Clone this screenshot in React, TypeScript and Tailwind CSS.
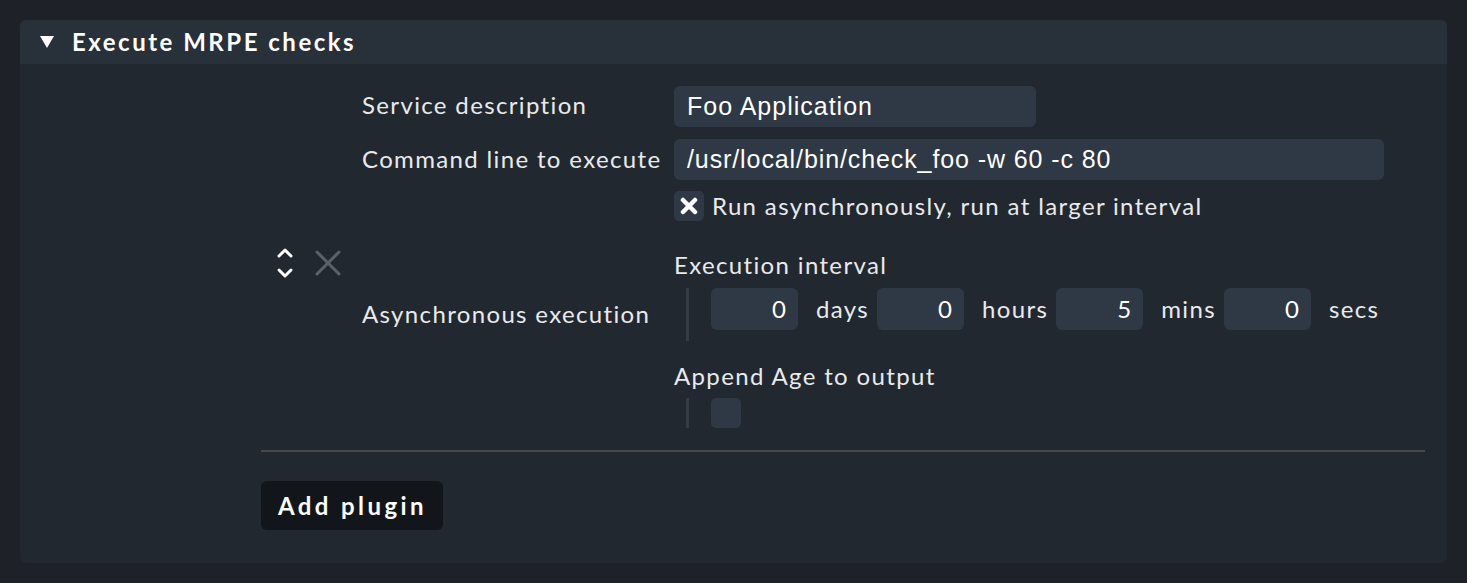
import React from 'react'

const LATO = { fontFamily: 'Lato, "Noto Sans", sans-serif' }
const ARIAL = { fontFamily: '"Liberation Sans", Arial, sans-serif' }

const INTERVAL = [
  { value: '0', unit: 'days' },
  { value: '0', unit: 'hours' },
  { value: '5', unit: 'mins' },
  { value: '0', unit: 'secs' },
]

function Chevrons() {
  return (
    <svg width="18" height="34" viewBox="0 0 18 34" fill="none" stroke="#ffffff" strokeWidth="3" strokeLinecap="round" strokeLinejoin="round">
      <path d="M3 10 L9 4 L15 10" />
      <path d="M3 24 L9 30 L15 24" />
    </svg>
  )
}

function Cross() {
  return (
    <svg width="28" height="28" viewBox="0 0 28 28" fill="none" stroke="#5a616b" strokeWidth="3" strokeLinecap="round">
      <path d="M3 3 L25 25 M25 3 L3 25" />
    </svg>
  )
}

function Label({ children }: { children: React.ReactNode }) {
  return <div className="text-[24px] leading-[28px] tracking-[1.35px] text-[#e9eaec]" style={LATO}>{children}</div>
}

export default function App() {
  return (
    <div className="min-h-[583px] bg-[#1e2128] p-5 pb-[21px]">
      <div className="rounded-md bg-[#222830] overflow-hidden">
        {/* header */}
        <div className="h-[44px] bg-[#28303a] flex items-center pl-[19px]">
          <svg width="16" height="14" viewBox="0 0 16 14">
            <path d="M1 1 L15 1 L8 13 Z" fill="#ffffff" />
          </svg>
          <span className="ml-[17px] text-[24px] font-bold tracking-[2.5px] text-white" style={LATO}>
            Execute MRPE checks
          </span>
        </div>

        {/* body */}
        <div className="pl-[241px] pr-[22px] pt-[22px] pb-[33px]">
          <div className="flex items-center">
            <div className="w-[101px] flex items-center gap-[20px] pl-[15px] mt-[11px]">
              <Chevrons />
              <Cross />
            </div>

            <div className="grid grid-cols-[312px_1fr] gap-y-[11px]">
              <div className="flex items-center h-[41px] -mt-[2px]"><Label>Service description</Label></div>
              <div className="h-[41px] w-[362px] rounded-md bg-[#2f3845] flex items-center px-[13px] text-[25px] tracking-[1px] text-white" style={ARIAL}>
                Foo Application
              </div>

              <div className="flex items-center h-[41px]"><Label>Command line to execute</Label></div>
              <div className="h-[41px] w-[710px] rounded-md bg-[#2f3845] flex items-center px-[13px] text-[25px] tracking-[0.9px] text-white mt-[1px]" style={ARIAL}>
                /usr/local/bin/check_foo -w 60 -c 80
              </div>

              <div className="flex items-center pt-[8px]"><Label>Asynchronous execution</Label></div>
              <div className="flex flex-col">
                <div className="flex items-center gap-[8px]">
                  <div className="w-[30px] h-[30px] rounded-[5px] bg-[#2f3845] flex items-center justify-center">
                    <svg width="18" height="18" viewBox="0 0 18 18" stroke="#ffffff" strokeWidth="4.5" strokeLinecap="round">
                      <path d="M3 3 L15 15 M15 3 L3 15" />
                    </svg>
                  </div>
                  <Label>Run asynchronously, run at larger interval</Label>
                </div>

                <div className="mt-[30px]"><Label>Execution interval</Label></div>
                <div className="flex mt-[9px]">
                  <div className="w-[3px] h-[53px] bg-[#353c47] ml-[12px] mr-[22px]" />
                  <div className="flex items-start gap-[8px]">
                    {INTERVAL.map((f) => (
                      <div key={f.unit} className="flex items-center gap-[18px]">
                        <div className="w-[87px] h-[42px] rounded-md bg-[#2f3845] flex items-center justify-end pr-[12px] text-[24px] text-white" style={LATO}>
                          {f.value}
                        </div>
                        <span className="text-[24px] tracking-[1.35px] text-[#e9eaec]" style={LATO}>{f.unit}</span>
                      </div>
                    ))}
                  </div>
                </div>

                <div className="mt-[21px]"><Label>Append Age to output</Label></div>
                <div className="flex mt-[8px]">
                  <div className="w-[3px] h-[30px] bg-[#353c47] ml-[12px] mr-[22px]" />
                  <div className="w-[30px] h-[30px] rounded-[5px] bg-[#2f3845]" />
                </div>
              </div>
            </div>
          </div>

          <div className="h-[2px] bg-[#48484a] mt-[22px]" />

          <button className="mt-[29px] h-[49px] w-[182px] pl-[17px] text-left rounded-md bg-[#12161b] text-[24px] font-bold tracking-[3.4px] text-white" style={LATO}>
            Add plugin
          </button>
        </div>
      </div>
    </div>
  )
}
